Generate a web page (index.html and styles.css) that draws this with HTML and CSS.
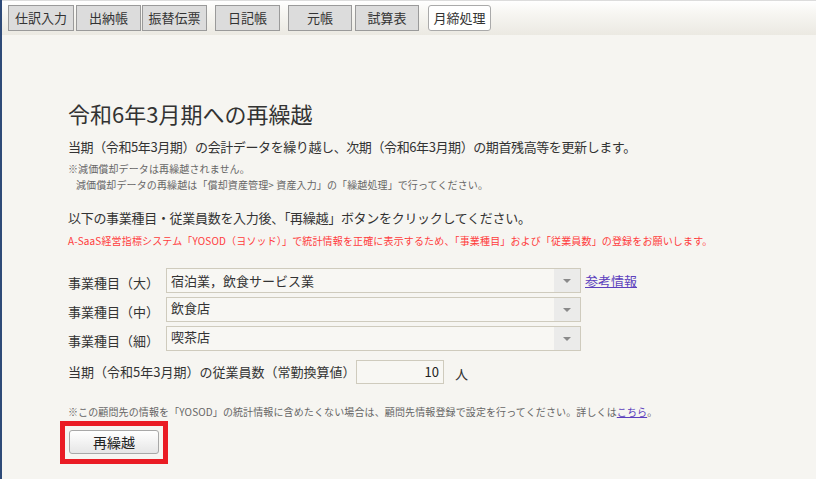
FILE: index.html
```html
<!DOCTYPE html>
<html lang="ja">
<head>
<meta charset="utf-8">
<title>再繰越</title>
<link rel="stylesheet" href="styles.css">
</head>
<body>
<div class="frame">
  <header class="topbar">
    <nav class="tabs">
      <span class="tab w66">仕訳入力</span>
      <span class="tab gap2">出納帳</span>
      <span class="tab gap1">振替伝票</span>
      <span class="tab gap8">日記帳</span>
      <span class="tab gap8 w64">元帳</span>
      <span class="tab gap3 w64">試算表</span>
      <span class="tab tab-active gap9">月締処理</span>
    </nav>
  </header>
  <main class="content">
    <h1 class="title">令和6年3月期への再繰越</h1>
    <p class="lead">当期（令和5年3月期）の会計データを繰り越し、次期（令和6年3月期）の期首残高等を更新します。</p>
    <p class="note note-first">※減価償却データは再繰越されません。</p>
    <p class="note note-indent">減価償却データの再繰越は「償却資産管理&gt; 資産入力」の「繰越処理」で行ってください。</p>
    <p class="lead lead-second">以下の事業種目・従業員数を入力後、「再繰越」ボタンをクリックしてください。</p>
    <p class="warn">A-SaaS経営指標システム「YOSOD（ヨソッド）」で統計情報を正確に表示するため、「事業種目」および「従業員数」の登録をお願いします。</p>
    <div class="form">
      <div class="row">
        <span class="label">事業種目（大）</span>
        <div class="select"><span class="select-text">宿泊業，飲食サービス業</span><span class="arrow"><span class="tri"></span></span></div>
        <a class="link ref-link" href="#">参考情報</a>
      </div>
      <div class="row">
        <span class="label">事業種目（中）</span>
        <div class="select"><span class="select-text top">飲食店</span><span class="arrow"><span class="tri"></span></span></div>
      </div>
      <div class="row">
        <span class="label">事業種目（細）</span>
        <div class="select"><span class="select-text top">喫茶店</span><span class="arrow"><span class="tri"></span></span></div>
      </div>
      <div class="row row-emp">
        <span class="label label-wide">当期（令和5年3月期）の従業員数（常勤換算値）</span>
        <div class="num-input">10</div>
        <span class="unit">人</span>
      </div>
    </div>
    <p class="note note-bottom">※この顧問先の情報を「YOSOD」の統計情報に含めたくない場合は、顧問先情報登録で設定を行ってください。詳しくは<a class="link" href="#">こちら</a>。</p>
    <div class="btn-highlight">
      <button class="btn" type="button">再繰越</button>
    </div>
  </main>
</div>
</body>
</html>
```

FILE: styles.css
```css
html, body {
  margin: 0;
  padding: 0;
  height: 100%;
}
body {
  background: #f6f5f1;
  font-family: "Noto Sans CJK JP", "Noto Sans", sans-serif;
  color: #333;
  overflow: hidden;
}
.frame {
  min-height: 100%;
  border-left: 2px solid #2e4a78;
  box-sizing: border-box;
}
.topbar {
  height: 35px;
  box-sizing: border-box;
  border-top: 1px solid #dcdcdc;
  background: linear-gradient(#ffffff 0%, #f7f6f2 35%, #ebe9e2 100%);
  padding: 4px 0 0 6px;
}
.tabs {
  display: flex;
  align-items: flex-start;
}
.tab {
  box-sizing: border-box;
  width: 65px;
  height: 26px;
  border: 1px solid #9a9a9a;
  background: #dcdcdc;
  font-size: 13px;
  line-height: 24px;
  text-align: center;
  color: #333;
  white-space: nowrap;
}
.w66 { width: 66px; }
.w64 { width: 64px; }
.gap1 { margin-left: 1px; }
.gap2 { margin-left: 2px; }
.gap3 { margin-left: 3px; }
.gap8 { margin-left: 8px; }
.gap9 { margin-left: 9px; }
.tab-active {
  width: 63px;
  background: #ffffff;
  border-color: #aaa;
  border-radius: 3px;
}
.content {
  padding-left: 66px;
}
.title {
  margin: 63px 0 0;
  font-size: 22px;
  line-height: 30px;
  font-weight: normal;
  color: #333;
}
.lead {
  margin: 9px 0 0;
  font-size: 13px;
  line-height: 20px;
  letter-spacing: -0.4px;
}
.lead-second {
  margin-top: 15px;
  letter-spacing: -0.3px;
}
.note {
  margin: 0;
  font-size: 10px;
  line-height: 16px;
  color: #666;
  letter-spacing: 0.12px;
}
.note-first { margin-top: 4px; }
.note-indent { padding-left: 8px; }
.warn {
  margin: 5px 0 0;
  font-size: 10px;
  line-height: 16px;
  color: #ff3c3c;
  letter-spacing: 0.15px;
}
.form {
  margin-top: 19px;
  display: flex;
  flex-direction: column;
  gap: 4px;
}
.row {
  display: flex;
  align-items: center;
  height: 25px;
}
.label {
  width: 98px;
  font-size: 13px;
  line-height: 20px;
  padding-top: 4px;
  white-space: nowrap;
}
.select {
  box-sizing: border-box;
  width: 415px;
  height: 25px;
  border: 1px solid #cfcbbd;
  background: #f8f7f3;
  display: flex;
  align-items: stretch;
}
.select-text {
  flex: 1;
  padding-left: 4px;
  font-size: 13px;
  line-height: 23px;
}
.select-text.top {
  line-height: 19px;
}
.arrow {
  width: 26px;
  background: #ebebea;
  display: flex;
  align-items: center;
  justify-content: center;
}
.tri {
  width: 0;
  height: 0;
  border-left: 4px solid transparent;
  border-right: 4px solid transparent;
  border-top: 4px solid #8a8a8a;
}
.link {
  color: #5c3fbd;
  text-decoration: underline;
}
.ref-link {
  margin-left: 4px;
  font-size: 13px;
  line-height: 20px;
}
.row-emp {
  margin-top: 5px;
  height: 24px;
}
.label-wide {
  width: 288px;
  padding-top: 0;
}
.num-input {
  box-sizing: border-box;
  width: 88px;
  height: 24px;
  border: 1px solid #cfcbbd;
  background: #f8f7f3;
  text-align: right;
  padding-right: 4px;
  font-size: 13px;
  line-height: 22px;
  color: #222;
}
.unit {
  margin-left: 11px;
  font-size: 13px;
  line-height: 20px;
  padding-top: 4px;
}
.note-bottom {
  margin-top: 20px;
}
.btn-highlight {
  display: inline-block;
  margin: 1px 0 0 -8px;
  border: 5px solid #ea1c24;
  padding: 4px 4px 5px 4px;
}
.btn {
  display: block;
  box-sizing: border-box;
  width: 90px;
  height: 24px;
  border: 1px solid #a8a8a8;
  border-radius: 3px;
  background: linear-gradient(#ffffff, #e6e6e6);
  font-family: "Noto Sans CJK JP", sans-serif;
  font-size: 14px;
  line-height: 20px;
  color: #222;
  padding: 0;
}
```
